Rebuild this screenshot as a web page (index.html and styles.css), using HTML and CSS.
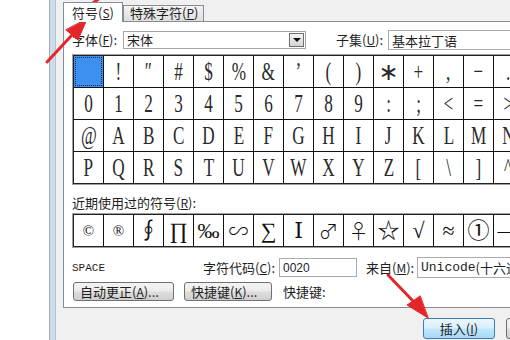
FILE: index.html
```html
<!DOCTYPE html>
<html lang="zh-CN">
<head>
    <meta charset="UTF-8">
    <title>符号</title>
    <link rel="stylesheet" href="styles.css">
</head>
<body>
    <div class="screen">
        <div class="outside"></div>
        <div class="frame"></div>
        <div class="dialog">
            <div class="tabs">
                <div class="tab active">符号(<u>S</u>)</div>
                <div class="tab">特殊字符(<u>P</u>)</div>
            </div>

            <div class="panel">
                <div class="font-row">
                    <span class="label font-label">字体(<u>F</u>):</span>
                    <div class="combo">
                        <span>宋体</span>
                        <span class="drop"></span>
                    </div>
                    <span class="label subset-label">子集(<u>U</u>):</span>
                    <div class="field subset">基本拉丁语</div>
                </div>

                <div class="chars">
                    <div class="grid">
                        <div class="cell sel"></div>
                        <div class="cell"><span class="g">!</span></div>
                        <div class="cell"><span class="g">″</span></div>
                        <div class="cell"><span class="g">#</span></div>
                        <div class="cell"><span class="g">$</span></div>
                        <div class="cell"><span class="g">%</span></div>
                        <div class="cell"><span class="g">&amp;</span></div>
                        <div class="cell"><span class="g">’</span></div>
                        <div class="cell"><span class="g">(</span></div>
                        <div class="cell"><span class="g">)</span></div>
                        <div class="cell"><span class="g star">∗</span></div>
                        <div class="cell"><span class="g">+</span></div>
                        <div class="cell"><span class="g">,</span></div>
                        <div class="cell"><span class="g">−</span></div>
                        <div class="cell"><span class="g">.</span></div>

                        <div class="cell"><span class="g">0</span></div>
                        <div class="cell"><span class="g">1</span></div>
                        <div class="cell"><span class="g">2</span></div>
                        <div class="cell"><span class="g">3</span></div>
                        <div class="cell"><span class="g">4</span></div>
                        <div class="cell"><span class="g">5</span></div>
                        <div class="cell"><span class="g">6</span></div>
                        <div class="cell"><span class="g">7</span></div>
                        <div class="cell"><span class="g">8</span></div>
                        <div class="cell"><span class="g">9</span></div>
                        <div class="cell"><span class="g">:</span></div>
                        <div class="cell"><span class="g">;</span></div>
                        <div class="cell"><span class="g">&lt;</span></div>
                        <div class="cell"><span class="g">=</span></div>
                        <div class="cell"><span class="g">&gt;</span></div>

                        <div class="cell"><span class="g">@</span></div>
                        <div class="cell"><span class="g">A</span></div>
                        <div class="cell"><span class="g">B</span></div>
                        <div class="cell"><span class="g">C</span></div>
                        <div class="cell"><span class="g">D</span></div>
                        <div class="cell"><span class="g">E</span></div>
                        <div class="cell"><span class="g">F</span></div>
                        <div class="cell"><span class="g">G</span></div>
                        <div class="cell"><span class="g">H</span></div>
                        <div class="cell"><span class="g">I</span></div>
                        <div class="cell"><span class="g">J</span></div>
                        <div class="cell"><span class="g">K</span></div>
                        <div class="cell"><span class="g">L</span></div>
                        <div class="cell"><span class="g">M</span></div>
                        <div class="cell"><span class="g">N</span></div>

                        <div class="cell"><span class="g">P</span></div>
                        <div class="cell"><span class="g">Q</span></div>
                        <div class="cell"><span class="g">R</span></div>
                        <div class="cell"><span class="g">S</span></div>
                        <div class="cell"><span class="g">T</span></div>
                        <div class="cell"><span class="g">U</span></div>
                        <div class="cell"><span class="g">V</span></div>
                        <div class="cell"><span class="g">W</span></div>
                        <div class="cell"><span class="g">X</span></div>
                        <div class="cell"><span class="g">Y</span></div>
                        <div class="cell"><span class="g">Z</span></div>
                        <div class="cell"><span class="g">[</span></div>
                        <div class="cell"><span class="g">\</span></div>
                        <div class="cell"><span class="g">]</span></div>
                        <div class="cell"><span class="g">^</span></div>
                    </div>
                </div>

                <div class="recent-label">近期使用过的符号(<u>R</u>):</div>
                <div class="chars recent">
                    <div class="grid">
                        <div class="cell small">©</div>
                        <div class="cell small">®</div>
                        <div class="cell">∮</div>
                        <div class="cell">∏</div>
                        <div class="cell">‰</div>
                        <div class="cell cjk">∽</div>
                        <div class="cell">∑</div>
                        <div class="cell">Ⅰ</div>
                        <div class="cell cjk">♂</div>
                        <div class="cell cjk">♀</div>
                        <div class="cell">☆</div>
                        <div class="cell">√</div>
                        <div class="cell">≈</div>
                        <div class="cell">①</div>
                        <div class="cell">—</div>
                    </div>
                </div>

                <div class="info-row">
                    <span class="char-name">SPACE</span>
                    <span class="label code-label">字符代码(<u>C</u>):</span>
                    <div class="field code">0020</div>
                    <span class="label from-label">来自(<u>M</u>):</span>
                    <div class="field from"><span class="mono">Unicode</span>(十六进制)</div>
                </div>

                <div class="button-row">
                    <button class="btn auto">自动更正(<u>A</u>)...</button>
                    <button class="btn keys">快捷键(<u>K</u>)...</button>
                    <span class="label shortcut">快捷键:</span>
                </div>
            </div>

            <div class="actions">
                <button class="btn default">插入(<u>I</u>)</button>
                <button class="btn">取消</button>
            </div>
        </div>

        <svg class="marks" width="510" height="340" viewBox="0 0 510 340">
            <g fill="#e3262a" stroke="#e3262a" stroke-linecap="round">
                <line x1="93" y1="3" x2="100" y2="-2" stroke-width="3"/>
                <line x1="47" y1="62" x2="72" y2="35" stroke-width="3"/>
                <polygon points="87,19 78,40 66,30" stroke-width="1"/>
                <line x1="388" y1="275" x2="413" y2="301" stroke-width="3"/>
                <polygon points="428,318 407,305 420,296" stroke-width="1"/>
            </g>
        </svg>
    </div>
</body>
</html>
```

FILE: styles.css
```css
* {
    box-sizing: border-box;
}

body {
    margin: 0;
    font-family: "Noto Sans CJK SC", sans-serif;
    font-size: 13px;
    color: #1e1e1e;
}

u {
    text-decoration: underline;
    font-size: 12px;
}

.screen {
    position: relative;
    display: flex;
    width: 510px;
    height: 340px;
    overflow: hidden;
    background: #fff;
}

.outside {
    width: 49px;
    flex-shrink: 0;
}

.frame {
    width: 7px;
    flex-shrink: 0;
    background: #cddced;
    border-left: 1px solid #a4abb3;
    border-right: 1px solid #b6c2ce;
}

.dialog {
    width: 530px;
    flex-shrink: 0;
    background: #f0f0f0;
    padding-left: 7px;
}

/* tabs */
.tabs {
    display: flex;
    align-items: flex-end;
    height: 21px;
}

.tab {
    height: 16px;
    width: 81px;
    padding-left: 6px;
    border: 1px solid #898c95;
    border-bottom: none;
    background: linear-gradient(#f3f3f3, #dedede);
    line-height: 14px;
    white-space: nowrap;
}

.tab.active {
    position: relative;
    z-index: 1;
    width: 60px;
    height: 20px;
    margin-bottom: -1px;
    padding-left: 8px;
    background: #fff;
    line-height: 20px;
}

/* main panel */
.panel {
    height: 287px;
    border: 1px solid #898c95;
    background: #fff;
    padding: 8px 0 0 8px;
}

.label {
    white-space: nowrap;
    line-height: 16px;
}

.font-row {
    display: flex;
    align-items: center;
    height: 20px;
}

.font-label {
    width: 51px;
}

.combo {
    display: flex;
    align-items: center;
    justify-content: space-between;
    width: 183px;
    height: 18px;
    border: 1px solid #a3a6ad;
    padding-left: 3px;
    line-height: 16px;
}

.drop {
    position: relative;
    width: 15px;
    height: 14px;
    margin-right: 1px;
    border: 1px solid #6f6f6f;
    background: linear-gradient(#f5f5f5, #d4d4d4);
}

.drop::after {
    content: "";
    position: absolute;
    left: 3px;
    top: 4px;
    border-left: 4px solid transparent;
    border-right: 4px solid transparent;
    border-top: 4px solid #111;
}

.subset-label {
    width: 52px;
    margin-left: 30px;
}

.field {
    display: flex;
    align-items: center;
    border: 1px solid #a9acb3;
    padding-left: 3px;
    white-space: nowrap;
}

.subset {
    width: 140px;
    height: 20px;
}

/* character grids */
.chars {
    width: max-content;
    margin-top: 4px;
    border: 1px solid #a0a0a0;
}

.grid {
    display: grid;
    grid-template-columns: repeat(15, 29px);
    grid-auto-rows: 31px;
    gap: 1px;
    background: #111;
    border: 1px solid #222;
}

.cell {
    display: flex;
    align-items: center;
    justify-content: center;
    background: #fff;
    font-family: "Liberation Serif", "DejaVu Serif", "Noto Sans CJK SC", serif;
    font-size: 26px;
    line-height: 30px;
    color: #2a2a2a;
    overflow: hidden;
}

.g {
    display: inline-block;
    transform: scaleX(0.66);
}

.g.star {
    font-family: "DejaVu Sans", sans-serif;
    font-size: 24px;
    transform: none;
}

.cell.sel {
    background: #3d8ff0;
    outline: 1px dotted #1b3050;
    outline-offset: -2px;
}

.recent-label {
    margin-top: 10px;
    line-height: 16px;
}

.recent {
    margin-top: 2px;
}

.recent .cell {
    font-size: 22px;
    color: #111;
}

.recent .cell.small {
    font-size: 15px;
}

.recent .cell.cjk {
    font-family: "Noto Sans CJK SC", "DejaVu Sans", sans-serif;
    font-size: 20px;
    font-weight: 300;
}

/* code row */
.info-row {
    display: flex;
    align-items: center;
    height: 21px;
    margin-top: 9px;
}

.char-name {
    width: 131px;
    font-family: "Liberation Mono", monospace;
    font-size: 11px;
}

.code-label {
    width: 76px;
}

.code {
    width: 78px;
    height: 19px;
    font-family: "Liberation Sans", sans-serif;
    font-size: 12px;
}

.from-label {
    width: 51px;
    margin-left: 9px;
}

.from {
    width: 130px;
    height: 21px;
}

.mono {
    font-family: "Liberation Mono", monospace;
    font-size: 13px;
}

/* buttons */
.button-row {
    display: flex;
    align-items: center;
    margin-top: 4px;
}

.btn {
    height: 19px;
    padding: 0 6px;
    border: 1px solid #707070;
    border-radius: 3px;
    background: linear-gradient(#f3f3f3 0%, #ebebeb 48%, #dddddd 52%, #cfcfcf 100%);
    font-family: "Noto Sans CJK SC", sans-serif;
    font-size: 13px;
    line-height: 15px;
    color: #1e1e1e;
    text-align: left;
    white-space: nowrap;
}

.auto {
    width: 101px;
    margin-left: 1px;
}

.keys {
    width: 88px;
    margin-left: 10px;
}

.shortcut {
    margin-left: 11px;
}

.actions {
    display: flex;
    justify-content: flex-end;
    gap: 11px;
    padding: 10px 8px 0 0;
}

.actions .btn {
    width: 72px;
    height: 21px;
    text-align: center;
}

.actions .btn.default {
    border-color: #3c7fb1;
    background: linear-gradient(#eaf6fd 0%, #d9f0fc 48%, #bee6fd 52%, #a7d9f5 100%);
}

/* red callout arrows drawn over the dialog */
.marks {
    position: absolute;
    left: 0;
    top: 0;
    pointer-events: none;
}
```
